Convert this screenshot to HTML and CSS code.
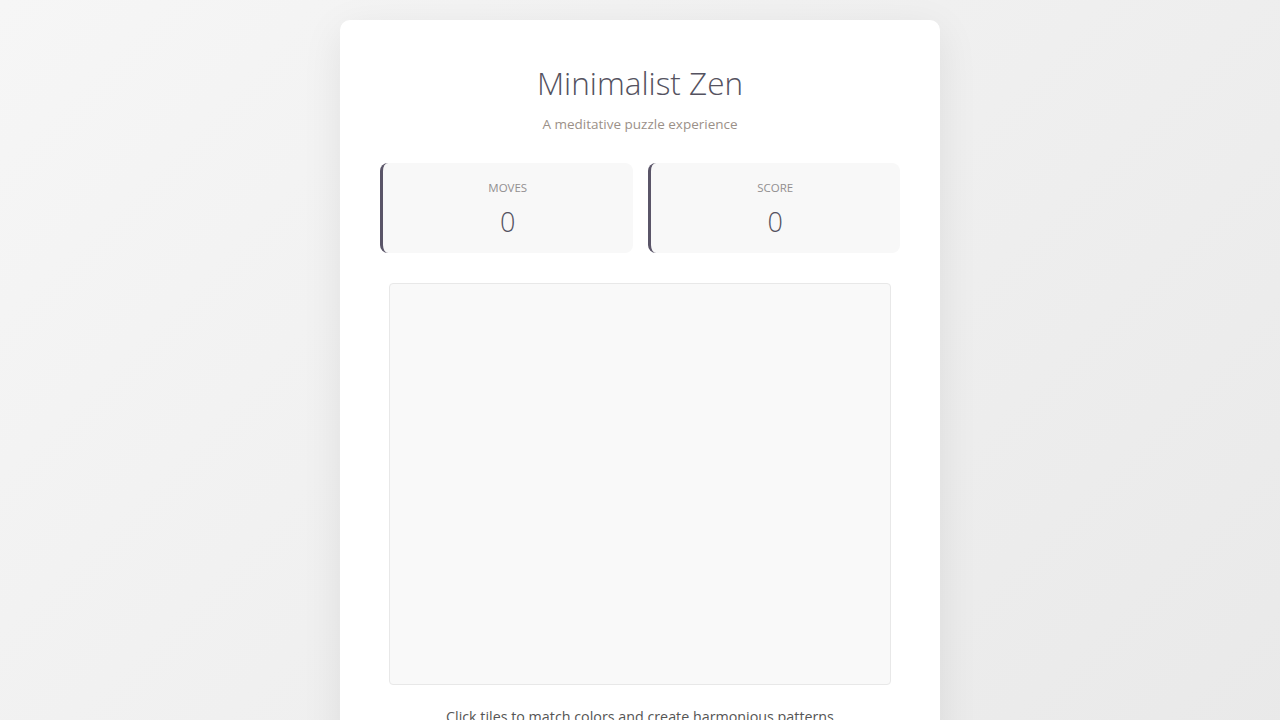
FILE: index.html
```html
<!DOCTYPE html>
<html lang="en">
<head>
    <meta charset="UTF-8">
    <meta name="viewport" content="width=device-width, initial-scale=1.0">
    <title>Minimalist Zen</title>
    <link rel="stylesheet" href="styles.css">
</head>
<body>
    <div class="game-container">
        <!-- Header -->
        <div class="header">
            <h1>Minimalist Zen</h1>
            <p class="subtitle">A meditative puzzle experience</p>
        </div>

        <!-- Stats -->
        <div class="stats">
            <div class="stat-box">
                <div class="stat-label">Moves</div>
                <div class="stat-value" id="moves">0</div>
            </div>
            <div class="stat-box">
                <div class="stat-label">Score</div>
                <div class="stat-value" id="score">0</div>
            </div>
        </div>

        <!-- Game board -->
        <div class="board" id="board"></div>

        <p class="instructions">Click tiles to match colors and create harmonious patterns</p>
    </div>
</body>
</html>
```

FILE: styles.css
```css
/* General Reset */
* {
    margin: 0;
    padding: 0;
    box-sizing: border-box;
}

body {
    font-family: 'Open Sans', 'Noto Sans', sans-serif;
    background: linear-gradient(135deg, #f6f6f6 0%, #e9e9e9 100%);
    color: #555;
    min-height: 100vh;
    display: flex;
    justify-content: center;
    padding-top: 20px;
}

/* Main card */
.game-container {
    width: 600px;
    background-color: #fff;
    border-radius: 10px;
    padding: 40px 40px 30px;
    box-shadow: 0 10px 40px rgba(0, 0, 0, 0.08);
}

/* Header */
.header {
    text-align: center;
}

.header h1 {
    font-size: 31.5px;
    font-weight: 300;
    color: #545260;
    line-height: 46px;
}

.subtitle {
    font-size: 13.5px;
    color: #9b9088;
    margin-top: 8px;
    line-height: 20px;
}

/* Stats */
.stats {
    display: grid;
    grid-template-columns: 1fr 1fr;
    gap: 15px;
    margin-top: 29px;
}

.stat-box {
    background-color: #f8f8f8;
    border-left: 3px solid #5a5568;
    border-radius: 8px;
    height: 90px;
    text-align: center;
    padding-top: 17px;
}

.stat-label {
    font-size: 11.5px;
    text-transform: uppercase;
    color: #928f90;
    line-height: 16px;
}

.stat-value {
    font-size: 27px;
    font-weight: 300;
    color: #545260;
    line-height: 36px;
    margin-top: 8px;
}

/* Board */
.board {
    width: 502px;
    height: 402px;
    margin: 30px auto 0;
    background-color: #f9f9f9;
    border: 1px solid #e8e8e8;
    border-radius: 4px;
}

.instructions {
    text-align: center;
    font-size: 14.3px;
    color: #555;
    margin-top: 22px;
}
```
